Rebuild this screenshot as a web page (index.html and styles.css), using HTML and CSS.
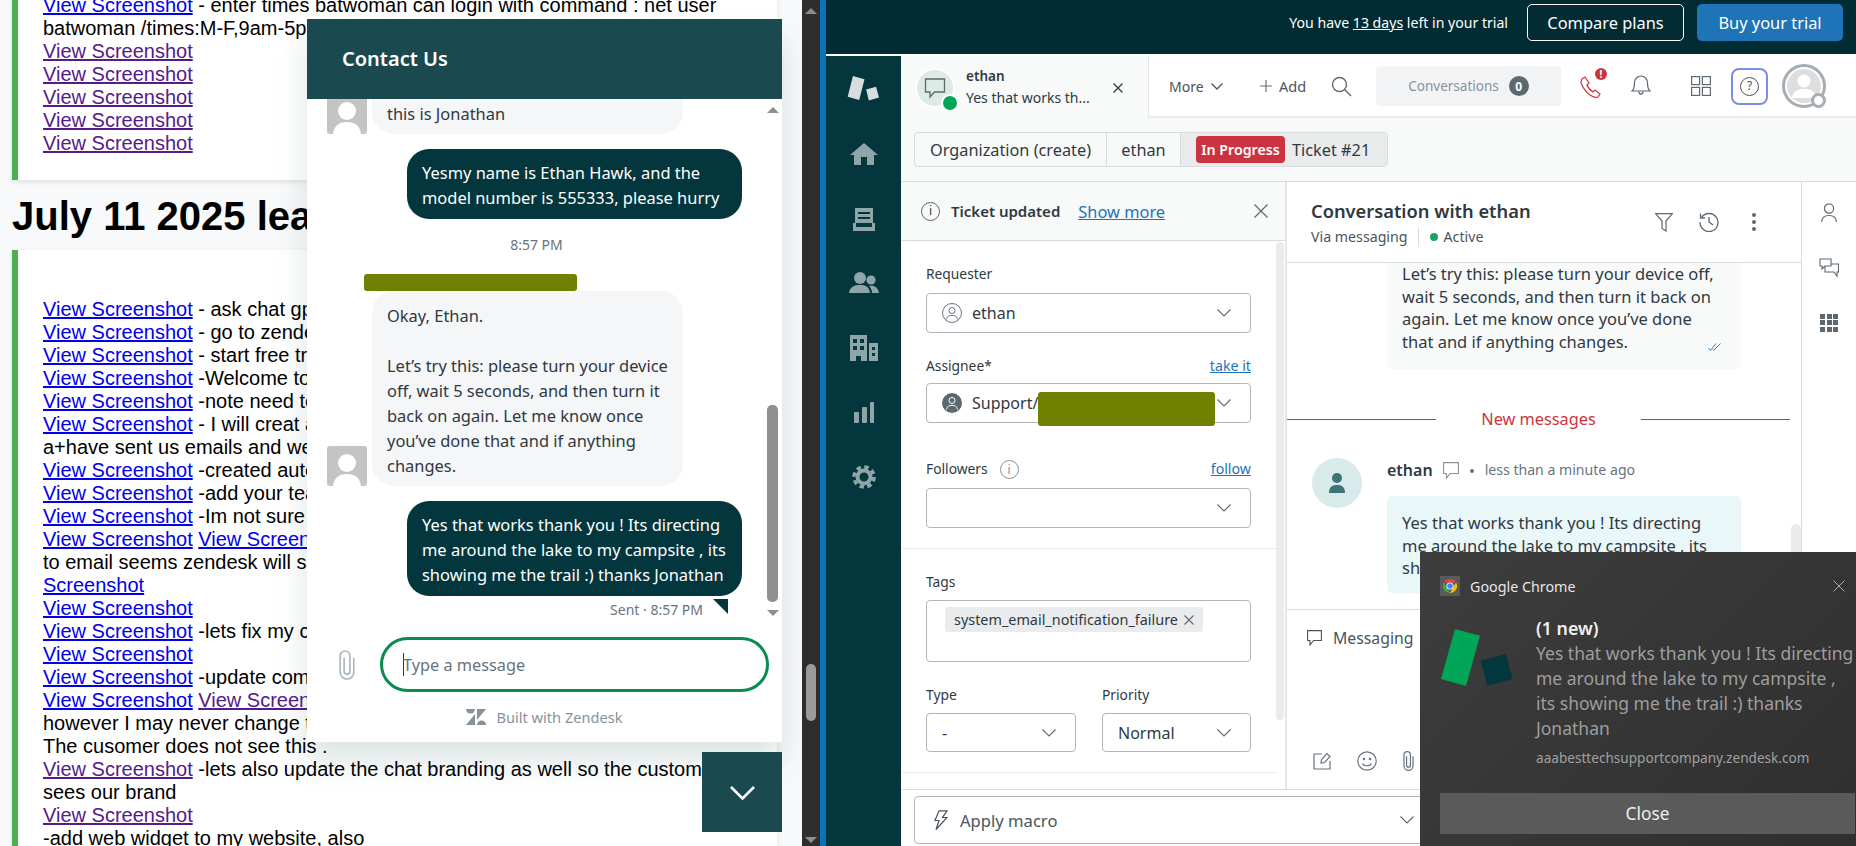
FILE: index.html
```html
<!DOCTYPE html>
<html>
<head>
<meta charset="UTF-8">
<title>Contact Us and Ticket #21</title>
<link rel="stylesheet" href="styles.css">
</head>
<body>

<div class="desktop">

  <!-- left browser window: notes page -->
  <div class="notes">
    <div class="card first-card">
      <a href="#">View Screenshot</a> - enter times batwoman can login with command : net user<br>
      batwoman /times:M-F,9am-5pm<br>
      <a href="#" class="seen">View Screenshot</a><br>
      <a href="#" class="seen">View Screenshot</a><br>
      <a href="#" class="seen">View Screenshot</a><br>
      <a href="#" class="seen">View Screenshot</a><br>
      <a href="#" class="seen">View Screenshot</a>
    </div>
    <h2>July 11 2025 learning</h2>
    <div class="card second-card">
      <a href="#">View Screenshot</a> - ask chat gpt<br>
      <a href="#">View Screenshot</a> - go to zendesk<br>
      <a href="#">View Screenshot</a> - start free trial<br>
      <a href="#">View Screenshot</a> -Welcome to zendesk<br>
      <a href="#">View Screenshot</a> -note need to<br>
      <a href="#">View Screenshot</a> - I will creat a<br>
      a+have sent us emails and we<br>
      <a href="#">View Screenshot</a> -created auto<br>
      <a href="#">View Screenshot</a> -add your team<br>
      <a href="#">View Screenshot</a> -Im not sure<br>
      <a href="#">View Screenshot</a> <a href="#">View Screenshot</a><br>
      to email seems zendesk will send<br>
      <a href="#">Screenshot</a><br>
      <a href="#">View Screenshot</a><br>
      <a href="#">View Screenshot</a> -lets fix my chat<br>
      <a href="#">View Screenshot</a><br>
      <a href="#">View Screenshot</a> -update company<br>
      <a href="#">View Screenshot</a> <a href="#" class="seen">View Screenshot</a><br>
      however I may never change this<br>
      The cusomer does not see this .<br>
      <a href="#" class="seen">View Screenshot</a> -lets also update the chat branding as well so the customer<br>
      sees our brand<br>
      <a href="#" class="seen">View Screenshot</a><br>
      -add web widget to my website, also
    </div>
  </div>

  <div class="win-scroll">
    <span class="arrow-up"></span>
    <span class="win-thumb"></span>
    <span class="arrow-down"></span>
  </div>
  <div class="win-edge"></div>

  <!-- right browser window: agent workspace -->
  <div class="app">
    <div class="trial">
      <span class="trial-text">You have <u>13 days</u> left in your trial</span>
      <button class="btn-outline">Compare plans</button>
      <button class="btn-buy">Buy your trial</button>
    </div>

    <div class="app-body">
      <div class="rail">
        <div class="rail-logo">
          <svg width="33" height="27" viewBox="80 225 100 80"><polygon points="98,227 133,237 117,300 82,290" fill="#d8dcde"/><polygon points="138,268 168,260 177,292 146,301" fill="#d8dcde"/></svg>
        </div>
        <div class="rail-item">
          <svg width="28" height="24" viewBox="0 0 28 24" fill="#8fa6a9"><path d="M14 1 L28 13 H24 V23 H17 V15 H11 V23 H4 V13 H0 Z"/></svg>
        </div>
        <div class="rail-item">
          <svg width="22" height="24" viewBox="0 0 22 24" fill="#8fa6a9"><path d="M2 1 H20 V16 H2 Z M5 5 V7 H17 V5 Z M5 10 V12 H17 V10 Z" fill-rule="evenodd"/><path d="M0 16 H3 V20 H19 V16 H22 V24 H0 Z"/></svg>
        </div>
        <div class="rail-item">
          <svg width="30" height="22" viewBox="0 0 30 22" fill="#8fa6a9"><circle cx="11" cy="6" r="6"/><path d="M0 21 C1 14 6 13 11 13 C16 13 20 14 21 21 Z"/><circle cx="22" cy="8" r="4.6"/><path d="M20 14 C25 13 29 15 30 21 H23 C23 18 22 16 20 14 Z"/></svg>
        </div>
        <div class="rail-item">
          <svg width="28" height="26" viewBox="0 0 28 26" fill="#8fa6a9"><path d="M0 0 H17 V26 H11 V21 H6 V26 H0 Z M3 4 V8 H7 V4 Z M10 4 V8 H14 V4 Z M3 11 V15 H7 V11 Z M10 11 V15 H14 V11 Z" fill-rule="evenodd"/><path d="M19 8 H28 V26 H19 Z M22 12 V15 H25 V12 Z M22 18 V21 H25 V18 Z" fill-rule="evenodd"/></svg>
        </div>
        <div class="rail-item">
          <svg width="20" height="21" viewBox="0 0 20 21" fill="#8fa6a9"><rect x="0" y="10" width="5" height="11" rx="1"/><rect x="8" y="5" width="5" height="16" rx="1"/><rect x="16" y="0" width="4.5" height="21" rx="1"/></svg>
        </div>
        <div class="rail-item">
          <svg width="24" height="24" viewBox="0 0 24 24" fill="none" stroke="#8fa6a9"><circle cx="12" cy="12" r="6.5" stroke-width="4"/><circle cx="12" cy="12" r="10" stroke-width="3.6" stroke-dasharray="4.4 3.45"/></svg>
        </div>
      </div>

      <div class="workspace">
        <div class="topbar">
          <div class="conv-tab">
            <div class="tab-avatar">
              <svg width="22" height="22" viewBox="0 0 22 22" fill="none" stroke="#5c6970" stroke-width="1.3"><path d="M1.5 2 H20.5 V15 H10.5 L6 20 V15 H1.5 Z"/></svg>
              <span class="tab-online"></span>
            </div>
            <div class="tab-text">
              <b>ethan</b>
              <span>Yes that works th...</span>
            </div>
            <svg class="tab-close" width="10" height="10" viewBox="0 0 10 10" stroke="#2f3941" stroke-width="1.3"><path d="M0.5 0.5 L9.5 9.5 M9.5 0.5 L0.5 9.5"/></svg>
          </div>
          <div class="nav">
            <div class="nav-more">More
              <svg width="12" height="7" viewBox="0 0 12 7" fill="none" stroke="#49545c" stroke-width="1.3"><path d="M0.5 0.5 L6 6 L11.5 0.5"/></svg>
            </div>
            <div class="nav-add">
              <svg width="12" height="12" viewBox="0 0 12 12" stroke="#68737d" stroke-width="1.2"><path d="M6 0 V12 M0 6 H12"/></svg>
              Add
            </div>
            <div class="nav-search">
              <svg width="21" height="21" viewBox="0 0 21 21" fill="none" stroke="#5c6970" stroke-width="1.4"><circle cx="8.5" cy="8.5" r="7"/><path d="M13.5 13.5 L20 20"/></svg>
            </div>
            <div class="nav-conv">
              <span>Conversations</span>
              <span class="conv-count">0</span>
            </div>
            <div class="nav-icon phone">
              <svg width="22" height="24" viewBox="0 0 22 24" fill="none" stroke="#cc3340" stroke-width="1.2"><path d="M2 4 L5 2 L9 8 L7 10 C8 13 10 15 13 17 L15 15 L20 19 L18 22 C16 23 13 22 10 20 C6 17 3 13 1 8 C1 6 1 5 2 4 Z"/></svg>
              <span class="phone-alert">!</span>
            </div>
            <div class="nav-icon bell">
              <svg width="20" height="20" viewBox="0 0 20 20" fill="none" stroke="#5c6970" stroke-width="1.2"><path d="M1 16 C3 14 3.5 12 3.5 8 C3.5 4 6.5 1 10 1 C13.5 1 16.5 4 16.5 8 C16.5 12 17 14 19 16 Z"/><path d="M8 16.5 C8 20 12 20 12 16.5"/></svg>
            </div>
            <div class="nav-icon apps">
              <svg width="20" height="20" viewBox="0 0 20 20" fill="none" stroke="#5c6970" stroke-width="1.2"><rect x="0.6" y="0.6" width="8" height="8"/><rect x="11.4" y="0.6" width="8" height="8"/><rect x="0.6" y="11.4" width="8" height="8"/><rect x="11.4" y="11.4" width="8" height="8"/></svg>
            </div>
            <div class="nav-help"><span>?</span></div>
            <div class="nav-user">
              <svg width="26" height="26" viewBox="0 0 26 26" fill="#fff"><circle cx="13" cy="8" r="6.5"/><path d="M1 25 C2 17 8 16 13 16 C18 16 24 17 25 25 Z"/></svg>
              <span class="user-status"></span>
            </div>
          </div>
        </div>

        <div class="crumbs">
          <div class="crumb-group">
            <span class="crumb crumb-org">Organization (create)</span>
            <span class="crumb crumb-user">ethan</span>
            <span class="crumb crumb-ticket"><span class="status-pill">In Progress</span>Ticket #21</span>
          </div>
        </div>

        <div class="panes">
          <div class="panes-main">
            <div class="panes-top">

              <div class="props">
                <div class="notice">
                  <span class="info-dark">i</span>
                  <b>Ticket updated</b>
                  <a href="#">Show more</a>
                  <svg class="notice-close" width="14" height="14" viewBox="0 0 14 14" stroke="#5c6970" stroke-width="1.2"><path d="M0.5 0.5 L13.5 13.5 M13.5 0.5 L0.5 13.5"/></svg>
                </div>
                <div class="props-body">
                  <div class="props-fields">
                    <section class="people">
                      <div class="field-label">Requester</div>
                      <div class="select">
                        <svg class="select-icon" width="20" height="20" viewBox="0 0 20 20" fill="none" stroke="#68737d" stroke-width="1"><circle cx="10" cy="10" r="9.5"/><circle cx="10" cy="7.5" r="3"/><path d="M4.5 16.5 C5 13 7.5 12.5 10 12.5 C12.5 12.5 15 13 15.5 16.5"/></svg>
                        <span>ethan</span>
                        <svg class="chev" width="14" height="8" viewBox="0 0 14 8" fill="none" stroke="#5c6970" stroke-width="1.1"><path d="M0.5 0.5 L7 7 L13.5 0.5"/></svg>
                      </div>
                      <div class="field-label label-assignee">Assignee*<a href="#">take it</a></div>
                      <div class="select select-assignee">
                        <svg class="select-icon" width="20" height="20" viewBox="0 0 20 20" fill="none" stroke="#fff" stroke-width="1"><circle cx="10" cy="10" r="10" fill="#5c6970" stroke="none"/><circle cx="10" cy="7.5" r="3"/><path d="M4.5 16.5 C5 13 7.5 12.5 10 12.5 C12.5 12.5 15 13 15.5 16.5"/></svg>
                        <span>Support/</span>
                        <svg class="chev" width="14" height="8" viewBox="0 0 14 8" fill="none" stroke="#5c6970" stroke-width="1.1"><path d="M0.5 0.5 L7 7 L13.5 0.5"/></svg>
                        <div class="redact-assignee"></div>
                      </div>
                      <div class="field-label label-followers">Followers<span class="info-light">i</span><a href="#">follow</a></div>
                      <div class="select">
                        <svg class="chev" width="14" height="8" viewBox="0 0 14 8" fill="none" stroke="#5c6970" stroke-width="1.1"><path d="M0.5 0.5 L7 7 L13.5 0.5"/></svg>
                      </div>
                    </section>
                    <section class="ticket-fields">
                      <div class="field-label">Tags</div>
                      <div class="tags-box">
                        <span class="tag">system_email_notification_failure
                          <svg width="10" height="10" viewBox="0 0 10 10" stroke="#5c6970" stroke-width="1.1"><path d="M0.5 0.5 L9.5 9.5 M9.5 0.5 L0.5 9.5"/></svg>
                        </span>
                      </div>
                      <div class="field-pair">
                        <div>
                          <div class="field-label">Type</div>
                          <div class="select select-small">
                            <span>-</span>
                            <svg class="chev" width="14" height="8" viewBox="0 0 14 8" fill="none" stroke="#5c6970" stroke-width="1.1"><path d="M0.5 0.5 L7 7 L13.5 0.5"/></svg>
                          </div>
                        </div>
                        <div>
                          <div class="field-label">Priority</div>
                          <div class="select select-small">
                            <span>Normal</span>
                            <svg class="chev" width="14" height="8" viewBox="0 0 14 8" fill="none" stroke="#5c6970" stroke-width="1.1"><path d="M0.5 0.5 L7 7 L13.5 0.5"/></svg>
                          </div>
                        </div>
                      </div>
                    </section>
                  </div>
                  <div class="props-scroll"></div>
                </div>
              </div>

              <div class="conversation">
                <div class="conv-head">
                  <div>
                    <div class="conv-title">Conversation with ethan</div>
                    <div class="conv-sub">
                      <span>Via messaging</span>
                      <span class="conv-active"><i></i>Active</span>
                    </div>
                  </div>
                  <div class="conv-tools">
                    <svg width="18" height="19" viewBox="0 0 18 19" fill="none" stroke="#5c6970" stroke-width="1.2"><path d="M0.6 0.6 H17.4 L11 8 V18 L7 15.5 V8 Z"/></svg>
                    <svg width="20" height="20" viewBox="0 0 20 20" fill="none" stroke="#5c6970" stroke-width="1.3"><path d="M2.5 5.5 A9 9 0 1 1 1 10"/><path d="M1.5 1.5 V6 H6"/><path d="M10 5 V10 L14 13"/></svg>
                    <svg class="tool-dots" width="4" height="18" viewBox="0 0 4 18" fill="#5c6970"><circle cx="2" cy="2" r="2"/><circle cx="2" cy="9" r="2"/><circle cx="2" cy="16" r="2"/></svg>
                  </div>
                </div>
                <div class="thread">
                  <div class="thread-bubble sent-bubble">
                    Let’s try this: please turn your device off,<br>
                    wait 5 seconds, and then turn it back on<br>
                    again. Let me know once you’ve done<br>
                    that and if anything changes.
                    <svg class="read-ticks" width="14" height="8" viewBox="0 0 14 8" fill="none" stroke="#1f73b7" stroke-width="0.9"><path d="M0.5 5 L2.5 7.5 L8 0.5 M5 6.5 L5.5 7.5 L12.5 0.5"/></svg>
                  </div>
                  <div class="new-messages"><span>New messages</span></div>
                  <div class="thread-row">
                    <div class="thread-avatar">
                      <svg width="16" height="20" viewBox="0 0 16 20" fill="#3d7478"><circle cx="8" cy="5" r="5"/><path d="M0 20 C0 13 4 12 8 12 C12 12 16 13 16 20 Z"/></svg>
                    </div>
                    <div>
                      <div class="thread-meta">
                        <b>ethan</b>
                        <svg width="16" height="17" viewBox="0 0 16 17" fill="none" stroke="#87929d" stroke-width="1.1"><path d="M0.6 0.6 H15.4 V11.5 H7 L3.5 16 V11.5 H0.6 Z"/></svg>
                        <i></i>
                        <span>less than a minute ago</span>
                      </div>
                      <div class="thread-bubble incoming-bubble">
                        Yes that works thank you ! Its directing<br>
                        me around the lake to my campsite , its<br>
                        showing me the trail :) thanks Jonathan
                      </div>
                    </div>
                  </div>
                  <div class="thread-scroll"></div>
                </div>
                <div class="composer">
                  <div class="composer-mode">
                    <svg width="15" height="16" viewBox="0 0 15 16" fill="none" stroke="#49545c" stroke-width="1.1"><path d="M0.6 0.6 H14.4 V10.5 H6.5 L3 15 V10.5 H0.6 Z"/></svg>
                    Messaging
                  </div>
                  <div class="composer-tools">
                    <svg width="18" height="18" viewBox="0 0 18 18" fill="none" stroke="#68737d" stroke-width="1.2"><path d="M9 2 H1 V17 H17 V9"/><path d="M8 11 L8.5 7.5 L14 1.5 L17 4.5 L11.5 10.5 Z"/></svg>
                    <svg width="20" height="20" viewBox="0 0 20 20" fill="none" stroke="#68737d" stroke-width="1.2"><circle cx="10" cy="10" r="9.2"/><circle cx="7" cy="8" r="0.7" fill="#68737d"/><circle cx="13" cy="8" r="0.7" fill="#68737d"/><path d="M5.5 12.5 C7 15.5 13 15.5 14.5 12.5"/></svg>
                    <svg width="11" height="20" viewBox="0 0 16 31" fill="none" stroke="#68737d" stroke-width="1.9"><path d="M15 8 V23 A7 7 0 0 1 1 23 V6 A5 5 0 0 1 11 6 V22 A3 3 0 0 1 5 22 V8"/></svg>
                  </div>
                </div>
              </div>
            </div>

            <div class="macro-bar">
              <div class="macro">
                <svg width="14" height="20" viewBox="0 0 14 20" fill="none" stroke="#49545c" stroke-width="1.2"><path d="M5 0.8 H13 L8.5 7.5 H13 L2 19.5 L5 10.5 H1 Z"/></svg>
                Apply macro
                <svg class="chev" width="14" height="8" viewBox="0 0 14 8" fill="none" stroke="#5c6970" stroke-width="1.1"><path d="M0.5 0.5 L7 7 L13.5 0.5"/></svg>
              </div>
            </div>
          </div>

          <div class="context">
            <div class="context-item">
              <svg width="16" height="20" viewBox="0 0 16 20" fill="none" stroke="#5c6970" stroke-width="1.2"><circle cx="8" cy="5.5" r="4.6"/><path d="M0.6 19 C1 13 5 12.5 8 12.5 C11 12.5 15 13 15.4 19"/></svg>
            </div>
            <div class="context-item">
              <svg width="20" height="20" viewBox="0 0 20 20" fill="none" stroke="#5c6970" stroke-width="1.1"><path d="M1 1 H12 V8 H6 L3 11 V8 H1 Z"/><path d="M6 8 V14 H15 L18 18 V14 H19.5 V6 H12"/></svg>
            </div>
            <div class="context-item">
              <div class="dots-grid">
                <i></i><i></i><i></i><i></i><i></i><i></i><i></i><i></i><i></i>
              </div>
            </div>
          </div>
        </div>
      </div>
    </div>
  </div>
</div>

<!-- chat widget, floats over the notes page -->
<div class="chat">
  <div class="chat-head">Contact Us</div>
  <div class="chat-body">
    <div class="chat-log">
      <div class="agent-row first-row">
        <div class="agent-avatar"><svg width="40" height="40" viewBox="0 0 40 40" fill="#fff"><circle cx="20" cy="17" r="9"/><path d="M6 40 C7 31 13 28 20 28 C27 28 33 31 34 40 Z"/></svg></div>
        <div class="bubble-in">this is Jonathan</div>
      </div>
      <div class="bubble-out first-out">Yesmy name is Ethan Hawk, and the<br>model number is 555333, please hurry</div>
      <div class="chat-time">8:57 PM</div>
      <div class="redact-name"></div>
      <div class="agent-row">
        <div class="agent-avatar"><svg width="40" height="40" viewBox="0 0 40 40" fill="#fff"><circle cx="20" cy="17" r="9"/><path d="M6 40 C7 31 13 28 20 28 C27 28 33 31 34 40 Z"/></svg></div>
        <div class="bubble-in tall">Okay, Ethan.<br><br>Let’s try this: please turn your device<br>off, wait 5 seconds, and then turn it<br>back on again. Let me know once<br>you’ve done that and if anything<br>changes.</div>
      </div>
      <div class="bubble-out">Yes that works thank you ! Its directing<br>me around the lake to my campsite , its<br>showing me the trail :) thanks Jonathan</div>
      <div class="chat-sent"><span>Sent · 8:57 PM</span><i></i></div>
    </div>
    <div class="chat-scroll">
      <span class="chat-up"></span>
      <span class="chat-thumb"></span>
      <span class="chat-down"></span>
    </div>
  </div>
  <div class="chat-input-row">
    <svg width="16" height="30" viewBox="0 0 16 31" fill="none" stroke="#a9b4c2" stroke-width="1.7"><path d="M15 8 V23 A7 7 0 0 1 1 23 V6 A5 5 0 0 1 11 6 V22 A3 3 0 0 1 5 22 V8"/></svg>
    <div class="chat-input"><i></i>Type a message</div>
  </div>
  <div class="chat-foot">
    <svg width="20" height="16" viewBox="0 0 20 16" fill="#87929d"><path d="M0 0 H9 A4.5 4.5 0 0 1 0 0 Z"/><path d="M11 0 H20 L11 11 Z"/><path d="M9 16 H0 L9 5 Z"/><path d="M11 16 A4.5 4.5 0 0 1 20 16 Z"/></svg>
    Built with Zendesk
  </div>
</div>
<div class="chat-toggle">
  <svg width="25" height="14" viewBox="0 0 25 14" fill="none" stroke="#fff" stroke-width="2.6"><path d="M1 1 L12.5 12.5 L24 1"/></svg>
</div>

<!-- windows notification -->
<div class="toast">
  <div class="toast-head">
    <span class="toast-app">
      <svg width="14" height="14" viewBox="0 0 14 14"><path d="M7 0 A7 7 0 0 1 13.1 3.5 H7 Z" fill="#ea4335"/><path d="M13.1 3.5 A7 7 0 0 1 7 14 L10 8.5 Z" fill="#fbbc05"/><path d="M7 14 A7 7 0 0 1 0.9 3.5 L4 8.5 Z" fill="#34a853"/><path d="M0.9 3.5 A7 7 0 0 1 7 0 V3.5 Z" fill="#ea4335"/><circle cx="7" cy="7" r="3.6" fill="#fff"/><circle cx="7" cy="7" r="2.8" fill="#4285f4"/></svg>
    </span>
    <span class="toast-title">Google Chrome</span>
    <svg class="toast-x" width="12" height="12" viewBox="0 0 12 12" stroke="#a8a8a8" stroke-width="1"><path d="M0.5 0.5 L11.5 11.5 M11.5 0.5 L0.5 11.5"/></svg>
  </div>
  <div class="toast-main">
    <svg class="toast-logo" width="72" height="57" viewBox="0 0 72 57"><polygon points="14,0 39,6.7 25,57 0,50" fill="#00a656"/><polygon points="40,31.7 65,25 71.3,50 46.3,57" fill="#03363d"/></svg>
    <div>
      <div class="toast-text"><b>(1 new)</b><br>Yes that works thank you ! Its directing<br>me around the lake to my campsite ,<br>its showing me the trail :) thanks<br>Jonathan</div>
      <div class="toast-domain">aaabesttechsupportcompany.zendesk.com</div>
    </div>
  </div>
  <div class="toast-close">Close</div>
</div>

</body>
</html>
```

FILE: styles.css
```css
* {
  box-sizing: border-box;
}
html, body {
  margin: 0;
  height: 846px;
  overflow: hidden;
}
body {
  font-family: "Noto Sans", sans-serif;
  color: #2f3941;
  position: relative;
  width: 1856px;
}
a {
  color: #1f73b7;
}
.desktop {
  display: flex;
  height: 846px;
}

/* notes page */
.notes {
  width: 802px;
  height: 846px;
  overflow: hidden;
  background-color: #f8f9fa;
  padding-left: 12px;
  font-family: "Liberation Sans", Arial, sans-serif;
  color: #000;
  font-size: 20px;
  line-height: 23px;
}
.notes a {
  color: #0000ee;
}
.notes a.seen {
  color: #551a8b;
}
.notes h2 {
  font-size: 40px;
  line-height: 46px;
  margin: 13px 0 11px;
  white-space: nowrap;
}
.card {
  width: 765px;
  background-color: white;
  border-left: 6px solid #4caf50;
  padding-left: 25px;
  white-space: nowrap;
  overflow: hidden;
  box-shadow: 0 2px 5px rgba(0, 0, 0, 0.1);
}
.first-card {
  margin-top: -6px;
  padding-bottom: 25px;
}
.second-card {
  padding-top: 48px;
}

.win-scroll {
  width: 18px;
  background-color: #2e2e2e;
  display: flex;
  flex-direction: column;
  align-items: center;
}
.arrow-up {
  margin-top: 8px;
  border: 6px solid transparent;
  border-top: 0;
  border-bottom: 6px solid #8c8c8c;
}
.win-thumb {
  width: 10px;
  height: 57px;
  margin-top: 650px;
  border-radius: 5px;
  background-color: #9b9b9b;
}
.arrow-down {
  margin-top: 116px;
  border: 6px solid transparent;
  border-bottom: 0;
  border-top: 6px solid #8c8c8c;
}
.win-edge {
  width: 6px;
  background-color: #0a74b8;
}

/* workspace */
.app {
  width: 1030px;
  display: flex;
  flex-direction: column;
  background-color: white;
}
.trial {
  height: 54px;
  flex-shrink: 0;
  background-color: #022c34;
  color: #fff;
  display: flex;
  align-items: flex-start;
  justify-content: flex-end;
  padding: 4px 13px 0 0;
  margin-bottom: 2px;
}
.trial-text {
  font-size: 14.1px;
  line-height: 38px;
  margin-right: 19px;
}
.btn-outline, .btn-buy {
  height: 37px;
  font-family: inherit;
  font-size: 16.4px;
  color: #fff;
  border-radius: 5px;
}
.btn-outline {
  width: 157px;
  background: none;
  border: 1px solid #fff;
  margin-right: 13px;
}
.btn-buy {
  width: 146px;
  background-color: #1f73b7;
  border: none;
}
.app-body {
  flex: 1;
  display: flex;
  min-height: 0;
}
.rail {
  width: 75px;
  flex-shrink: 0;
  background-color: #03363d;
}
.rail-logo {
  height: 66px;
  display: flex;
  align-items: center;
  justify-content: center;
  padding-bottom: 2px;
}
.rail-item {
  height: 64.6px;
  display: flex;
  align-items: center;
  justify-content: center;
}
.workspace {
  width: 955px;
  display: flex;
  flex-direction: column;
  background-color: #f8f9f9;
}

.topbar {
  height: 62px;
  flex-shrink: 0;
  display: flex;
}
.conv-tab {
  width: 247px;
  display: flex;
  align-items: center;
  padding-left: 15px;
}
.tab-avatar {
  width: 38px;
  height: 38px;
  border-radius: 50%;
  background-color: #dcebe6;
  border: 1px solid #fff;
  box-shadow: 0 0 0 1px #fff;
  position: relative;
  display: flex;
  align-items: center;
  justify-content: center;
  margin-top: 2px;
}
.tab-online {
  position: absolute;
  right: -6px;
  bottom: -6px;
  width: 18px;
  height: 18px;
  border-radius: 50%;
  background-color: #00a656;
  border: 2px solid #fff;
}
.tab-text {
  width: 147px;
  margin-left: 12px;
  font-size: 14px;
  line-height: 21px;
  display: flex;
  flex-direction: column;
  white-space: nowrap;
}
.tab-text b {
  font-size: 13.5px;
  font-weight: 600;
}
.tab-close {
  margin-top: 2px;
}
.nav {
  flex: 1;
  display: flex;
  align-items: center;
  background-color: white;
  border-left: 1px solid #e3e5e7;
  border-bottom: 2px solid #e9ebed;
  padding-left: 20px;
  font-size: 14px;
  color: #49545c;
}
.nav-more {
  width: 91px;
  display: flex;
  align-items: center;
  gap: 7px;
}
.nav-add {
  width: 71px;
  display: flex;
  align-items: center;
  gap: 7px;
  font-size: 14.5px;
}
.nav-search {
  width: 45px;
  display: flex;
}
.nav-conv {
  width: 185px;
  height: 40px;
  border-radius: 4px;
  background-color: #f2f3f5;
  color: #87929d;
  display: flex;
  align-items: center;
  justify-content: center;
  gap: 10px;
  font-size: 13.5px;
}
.conv-count {
  width: 20px;
  height: 20px;
  border-radius: 50%;
  background-color: #5c6970;
  color: #fff;
  font-size: 12px;
  font-weight: bold;
  display: flex;
  align-items: center;
  justify-content: center;
}
.nav-icon {
  display: flex;
  position: relative;
}
.phone {
  margin-left: 19px;
  margin-top: 2px;
}
.phone-alert {
  position: absolute;
  right: -5px;
  top: -7px;
  width: 12px;
  height: 12px;
  border-radius: 50%;
  background-color: #cc3340;
  color: #fff;
  font-size: 10px;
  line-height: 12px;
  font-weight: bold;
  text-align: center;
}
.bell {
  margin-left: 29px;
  margin-top: -2px;
}
.apps {
  margin-left: 40px;
}
.nav-help {
  width: 37px;
  height: 37px;
  margin-left: 20px;
  border: 2px solid #7b8fe0;
  border-radius: 8px;
  display: flex;
  align-items: center;
  justify-content: center;
}
.nav-help span {
  width: 19px;
  height: 19px;
  border: 1.2px solid #49545c;
  border-radius: 50%;
  font-size: 12px;
  line-height: 16px;
  text-align: center;
}
.nav-user {
  width: 44px;
  height: 44px;
  margin-left: 14px;
  border: 3px solid #a5adb5;
  border-radius: 50%;
  background-color: #dedede;
  box-shadow: inset 0 0 0 2px #fff;
  position: relative;
  display: flex;
  align-items: center;
  justify-content: center;
}
.user-status {
  position: absolute;
  right: -3px;
  bottom: -3px;
  width: 15px;
  height: 15px;
  border-radius: 50%;
  background-color: #fff;
  border: 3px solid #a5adb5;
}

.crumbs {
  height: 64px;
  flex-shrink: 0;
  padding: 14px 0 0 13px;
  border-bottom: 1px solid #d8dcde;
}
.crumb-group {
  display: inline-flex;
  height: 35px;
  border: 1px solid #d8dcde;
  border-radius: 4px;
  font-size: 16.3px;
}
.crumb {
  display: flex;
  align-items: center;
  justify-content: center;
  white-space: nowrap;
}
.crumb-org {
  width: 192px;
  border-right: 1px solid #d8dcde;
}
.crumb-user {
  width: 74px;
  border-right: 1px solid #d8dcde;
}
.crumb-ticket {
  width: 206px;
  background-color: #e9ebed;
  justify-content: flex-start;
  padding-left: 15px;
  gap: 7px;
}
.status-pill {
  height: 27px;
  width: 89px;
  border-radius: 4px;
  background-color: #cc3340;
  color: #fff;
  font-size: 14.2px;
  font-weight: 600;
  line-height: 27px;
  text-align: center;
}

.panes {
  flex: 1;
  display: flex;
  min-height: 0;
  background-color: white;
}
.panes-main {
  width: 901px;
  display: flex;
  flex-direction: column;
}
.panes-top {
  flex: 1;
  display: flex;
  min-height: 0;
}

/* ticket properties */
.props {
  width: 386px;
  border-right: 2px solid #e3e5e7;
  display: flex;
  flex-direction: column;
}
.notice {
  height: 59px;
  flex-shrink: 0;
  background-color: #f8f9f9;
  border-bottom: 1px solid #d8dcde;
  display: flex;
  align-items: center;
  padding-left: 20px;
  font-size: 15px;
}
.info-dark, .info-light {
  border-radius: 50%;
  display: inline-block;
  text-align: center;
}
.info-dark {
  width: 19px;
  height: 19px;
  border: 1.3px solid #5c6970;
  font-size: 12px;
  line-height: 16px;
  margin-right: 11px;
}
.notice b {
  font-weight: 600;
  margin-right: 18px;
}
.notice a {
  font-size: 16.4px;
}
.notice-close {
  margin-left: auto;
  margin-right: 17px;
}
.props-body {
  flex: 1;
  display: flex;
  min-height: 0;
}
.props-fields {
  width: 375px;
}
.props-scroll {
  width: 8px;
  height: 478px;
  margin-top: 1px;
  background-color: #e9ebed;
  border-radius: 4px;
}
.people {
  padding: 23px 25px 20px;
  border-bottom: 1px solid #e9ebed;
}
.field-label {
  height: 20px;
  font-size: 13.8px;
  line-height: 20px;
  display: flex;
  align-items: center;
  margin-bottom: 9px;
}
.field-label a {
  margin-left: auto;
  font-size: 14.2px;
}
.label-assignee {
  margin-top: 23px;
  margin-bottom: 7px;
}
.label-followers {
  margin-top: 36px;
}
.info-light {
  width: 19px;
  height: 19px;
  border: 1px solid #87929d;
  color: #87929d;
  font-size: 12px;
  line-height: 17px;
  margin-left: 12px;
}
.select {
  height: 40px;
  border: 1px solid #b0b7be;
  border-radius: 4px;
  display: flex;
  align-items: center;
  padding-left: 15px;
  font-size: 16px;
  position: relative;
}
.select-icon {
  margin-right: 10px;
}
.chev {
  margin-left: auto;
  margin-right: 19px;
}
.redact-assignee {
  position: absolute;
  left: 111px;
  top: 8px;
  width: 177px;
  height: 34px;
  background-color: #708000;
  border-radius: 3px;
}
.ticket-fields {
  padding: 23px 25px 20px;
  border-bottom: 1px solid #e9ebed;
}
.ticket-fields .field-label {
  margin-bottom: 8px;
}
.tags-box {
  height: 62px;
  border: 1px solid #b0b7be;
  border-radius: 4px;
  padding: 6px 0 0 18px;
}
.tag {
  display: inline-flex;
  align-items: center;
  gap: 6px;
  height: 25px;
  width: 258px;
  padding-left: 9px;
  background-color: #e9ebed;
  border-radius: 3px;
  font-size: 14.4px;
  white-space: nowrap;
}
.field-pair {
  display: grid;
  grid-template-columns: 150px 149px;
  column-gap: 26px;
  margin-top: 23px;
}
.select-small {
  height: 39px;
}
.select-small .chev {
  margin-right: 19px;
}

/* conversation */
.conversation {
  width: 515px;
  display: flex;
  flex-direction: column;
  border-right: 1px solid #d8dcde;
}
.conv-head {
  height: 81px;
  flex-shrink: 0;
  border-bottom: 1px solid #d8dcde;
  display: flex;
  padding: 17px 0 0 24px;
}
.conv-title {
  font-size: 18.3px;
  font-weight: 600;
  line-height: 24px;
  white-space: nowrap;
}
.conv-sub {
  font-size: 14.2px;
  line-height: 20px;
  margin-top: 4px;
  color: #49545c;
  display: flex;
  white-space: nowrap;
}
.conv-active {
  border-left: 1px solid #d8dcde;
  margin-left: 10px;
  padding-left: 11px;
  display: flex;
  align-items: center;
}
.conv-active i {
  width: 8px;
  height: 8px;
  border-radius: 50%;
  background-color: #17a662;
  margin-right: 6px;
}
.conv-tools {
  margin-left: auto;
  margin-right: 45px;
  margin-top: 13px;
  height: 20px;
  display: flex;
  align-items: center;
  gap: 26px;
}
.tool-dots {
  margin-left: 7px;
}
.thread {
  flex: 1;
  min-height: 0;
  overflow: hidden;
  position: relative;
  padding-left: 25px;
  font-size: 16.5px;
  line-height: 22.7px;
}
.thread-bubble {
  width: 354px;
  border-radius: 5px;
  padding-left: 15px;
  position: relative;
  white-space: nowrap;
}
.sent-bubble {
  margin-left: 75px;
  margin-top: -20px;
  padding-top: 20px;
  padding-bottom: 15px;
  background-color: #f8f9f9;
}
.read-ticks {
  position: absolute;
  right: 19px;
  bottom: 18px;
}
.new-messages {
  margin: 40px 11px 0 -25px;
  height: 22px;
  display: flex;
  align-items: center;
  justify-content: center;
  gap: 45px;
  color: #cc3340;
  font-size: 16.3px;
}
.new-messages::before, .new-messages::after {
  content: "";
  flex: 1;
  height: 1px;
  background-color: #cc3340;
}
.thread-row {
  display: flex;
  margin-top: 27px;
}
.thread-avatar {
  width: 50px;
  height: 50px;
  border-radius: 50%;
  background-color: #d8eaea;
  margin-right: 25px;
  display: flex;
  align-items: center;
  justify-content: center;
}
.thread-meta {
  height: 22px;
  margin-top: 2px;
  margin-bottom: 14px;
  display: flex;
  align-items: center;
  font-size: 14.1px;
  color: #68737d;
}
.thread-meta b {
  font-size: 16px;
  font-weight: 600;
  color: #2f3941;
  margin-right: 10px;
}
.thread-meta i {
  width: 4px;
  height: 4px;
  border-radius: 50%;
  background-color: #68737d;
  margin: 0 11px;
}
.incoming-bubble {
  background-color: #e9f7f8;
  padding-top: 16px;
  padding-bottom: 13px;
}
.thread-scroll {
  position: absolute;
  right: 0;
  top: 261px;
  width: 10px;
  height: 40px;
  background-color: #e9ebed;
  border-radius: 5px;
}
.composer {
  height: 180px;
  flex-shrink: 0;
  border-top: 1px solid #d8dcde;
  padding: 17px 0 0 20px;
  display: flex;
  flex-direction: column;
}
.composer-mode {
  display: flex;
  align-items: center;
  gap: 11px;
  font-size: 15.8px;
  color: #49545c;
}
.composer-tools {
  margin-top: auto;
  margin-bottom: 18px;
  margin-left: 6px;
  display: flex;
  align-items: center;
  gap: 26px;
}
.macro-bar {
  height: 57px;
  flex-shrink: 0;
  border-top: 1px solid #d8dcde;
  padding: 6px 0 0 13px;
}
.macro {
  width: 520px;
  height: 48px;
  border: 1px solid #b0b7be;
  border-radius: 4px;
  display: flex;
  align-items: center;
  padding-left: 19px;
  gap: 12px;
  font-size: 16.6px;
  color: #49545c;
}
.context {
  width: 54px;
  display: flex;
  flex-direction: column;
  padding-top: 3px;
}
.context-item {
  height: 55px;
  display: flex;
  align-items: center;
  justify-content: center;
}
.dots-grid {
  display: grid;
  grid-template-columns: repeat(3, 5px);
  gap: 1.5px;
}
.dots-grid i {
  height: 5px;
  background-color: #5c6970;
}

/* chat widget */
.chat {
  position: absolute;
  left: 307px;
  top: 19px;
  width: 475px;
  height: 723px;
  background-color: white;
  box-shadow: 0 20px 30px rgba(23, 73, 77, 0.15);
  display: flex;
  flex-direction: column;
  z-index: 2;
}
.chat-head {
  height: 80px;
  flex-shrink: 0;
  background-color: #1a4a4f;
  color: white;
  font-size: 20px;
  font-weight: 600;
  line-height: 80px;
  padding-left: 35px;
}
.chat-body {
  height: 527px;
  flex-shrink: 0;
  display: flex;
}
.chat-log {
  width: 459px;
  overflow: hidden;
  display: flex;
  flex-direction: column;
  font-size: 16.45px;
  line-height: 25px;
  white-space: nowrap;
}
.agent-row {
  display: flex;
  align-items: flex-end;
  padding-left: 20px;
  gap: 5px;
}
.first-row {
  margin-top: -5px;
  min-height: 40px;
}
.agent-avatar {
  width: 40px;
  height: 40px;
  flex-shrink: 0;
  background-color: #c4c4c4;
  border-radius: 3px;
  overflow: hidden;
}
.bubble-in {
  width: 311px;
  background-color: #f5f6f7;
  padding: 12px 15px 8px;
  border-radius: 22px;
}
.first-row .bubble-in {
  padding: 2px 15px 8px;
  border-radius: 0 0 22px 22px;
}
.bubble-out {
  align-self: flex-end;
  width: 335px;
  margin-right: 24px;
  margin-top: 15px;
  padding: 11px 15px 9px;
  background-color: #03363d;
  color: white;
  border-radius: 22px;
}
.chat-time {
  margin-top: 16px;
  font-size: 14px;
  line-height: 20px;
  color: #68737d;
  text-align: center;
}
.redact-name {
  width: 213px;
  height: 17px;
  margin: 19px 0 0 57px;
  background-color: #708000;
  border-radius: 3px;
  flex-shrink: 0;
}
.chat-sent {
  display: flex;
  justify-content: flex-end;
  gap: 10px;
  margin: 3px 38px 0 0;
  font-size: 14px;
  line-height: 18px;
  color: #68737d;
}
.chat-sent span {
  margin-top: 2px;
}
.chat-sent i {
  width: 0;
  height: 0;
  border-top: 15px solid #03363d;
  border-left: 15px solid transparent;
}
.chat-scroll {
  width: 13px;
  display: flex;
  flex-direction: column;
  align-items: center;
}
.chat-up {
  margin-top: 8px;
  border: 6px solid transparent;
  border-top: 0;
  border-bottom: 6px solid #8e8e8e;
}
.chat-thumb {
  width: 11px;
  height: 197px;
  margin-top: 292px;
  border-radius: 5px;
  background-color: #8f8f8f;
}
.chat-down {
  margin-top: 8px;
  border: 6px solid transparent;
  border-bottom: 0;
  border-top: 6px solid #8e8e8e;
}
.chat-input-row {
  display: flex;
  align-items: center;
  gap: 25px;
  margin-top: 11px;
  padding-left: 32px;
}
.chat-input {
  width: 389px;
  height: 55px;
  border: 3px solid #0d8a52;
  border-radius: 28px;
  padding-left: 20px;
  display: flex;
  align-items: center;
  font-size: 16.3px;
  color: #68737d;
}
.chat-input i {
  width: 1px;
  height: 23px;
  margin-right: -1px;
  background-color: #2f3941;
}
.chat-foot {
  height: 50px;
  display: flex;
  align-items: center;
  justify-content: center;
  gap: 10px;
  font-size: 14.6px;
  color: #87929d;
}
.chat-toggle {
  position: absolute;
  left: 702px;
  top: 752px;
  width: 80px;
  height: 80px;
  background-color: #1a4a4f;
  display: flex;
  align-items: center;
  justify-content: center;
  padding-top: 2px;
  z-index: 2;
}

/* notification */
.toast {
  position: absolute;
  left: 1420px;
  top: 552px;
  width: 436px;
  height: 294px;
  background: linear-gradient(135deg, #3d3d3d, #2f2f2f);
  padding: 24px 0 0 20px;
  z-index: 3;
}
.toast-head {
  display: flex;
  align-items: center;
  height: 20px;
}
.toast-app {
  width: 20px;
  height: 20px;
  background-color: #5a5a5a;
  display: flex;
  align-items: center;
  justify-content: center;
  margin-right: 10px;
}
.toast-title {
  font-size: 14.3px;
  color: #e6e6e6;
}
.toast-x {
  margin-left: auto;
  margin-right: 11px;
}
.toast-main {
  display: flex;
  margin-top: 20px;
}
.toast-logo {
  margin: 13px 23px 0 1px;
  flex-shrink: 0;
}
.toast-text {
  font-size: 17.5px;
  line-height: 25px;
  color: #9e9e9e;
  white-space: nowrap;
}
.toast-text b {
  font-size: 17.8px;
  color: #f0f0f0;
  font-weight: 600;
}
.toast-domain {
  margin-top: 7px;
  font-size: 13.6px;
  line-height: 20px;
  color: #a0a0a0;
  white-space: nowrap;
}
.toast-close {
  width: 415px;
  height: 41px;
  margin-top: 25px;
  background-color: #5a5a5a;
  color: #eee;
  font-size: 17.3px;
  line-height: 41px;
  text-align: center;
}
```
